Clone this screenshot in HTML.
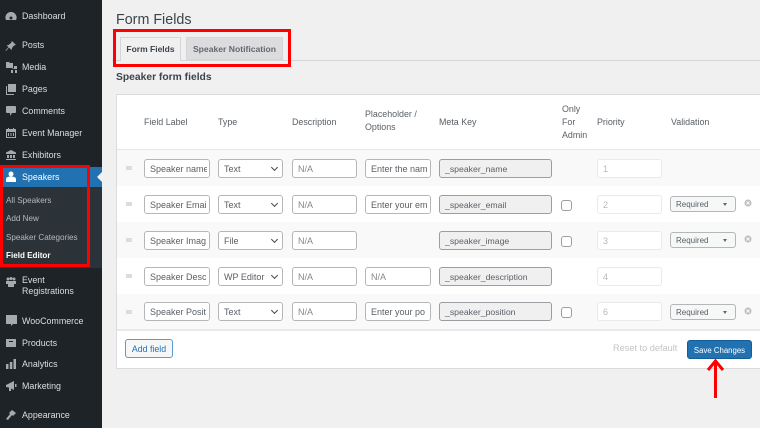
<!DOCTYPE html>
<html><head><meta charset="utf-8"><style>
html,body{margin:0;padding:0}
body{width:760px;height:428px;overflow:hidden;background:#f0f0f1;position:relative;font-family:"Liberation Sans",sans-serif;color:#3c434a}
div,span{position:absolute;box-sizing:border-box;white-space:nowrap}
.m{left:22px;font-size:8.9px;color:#dcdee0;line-height:12px}
.s{left:6px;font-size:8.1px;color:#b4b9be;line-height:12px}
.ic{position:absolute;left:5px}
.h{font-size:8.9px;color:#5a6066;line-height:13px}
.r{left:117px;width:643px;height:36px}
.i{height:19px;border:1px solid #b4b6b8;border-radius:3px;background:#fff;font-size:9px;color:#5a6066;line-height:18px;padding-left:5px;overflow:hidden}
.t:after{content:"";position:absolute;right:0;top:0;width:2px;height:17px;background:#fff}
.g{background:#f0f0f1;border-color:#9a9da1;font-size:8.7px}
.p{background:#fff;border-color:#e9eaeb;color:#b5b8bb}
.v{height:16px;width:66px;left:670px;border:1px solid #b4b6b8;border-radius:3px;background:#f6f7f7;font-size:8px;line-height:15px;padding-left:5px;color:#5a6066}
.v:after{content:"";position:absolute;right:8px;top:6px;border:2.500px solid transparent;border-top:3px solid #666;border-bottom:0}
.c{width:11px;height:11px;left:561px;border:1px solid #9a9da1;border-radius:3px;background:#fff}
.x{position:absolute;left:744px}
.d{left:126px;width:6px;height:4px;background:#dcdcde}
.a:after{content:"";position:absolute;right:5px;top:5px;width:4px;height:4px;border-right:1.100px solid #444;border-bottom:1.100px solid #444;transform:rotate(45deg)}
</style></head><body>
<div style="left:0;top:0;width:102px;height:428px;background:#1d2327"></div>
<div style="left:0;top:167px;width:102px;height:20px;background:#2271b1"></div>
<div style="left:0;top:187px;width:102px;height:81px;background:#2c3338"></div>
<div style="left:97px;top:172px;border:5px solid transparent;border-right:5px solid #f0f0f1;border-left:0"></div>

<svg class="ic" style="top:11px" width="12" height="12" viewBox="0 0 12 12"><path fill="#a7aaad" d="M6 1a5.500 5.500 0 0 0-5 8h10a5.500 5.500 0 0 0-5-8z"/><circle cx="6" cy="7" r="1.500" fill="#1d2327"/></svg>
<div class="m" style="top:10px">Dashboard</div>
<svg class="ic" style="top:40px" width="12" height="12" viewBox="0 0 12 12"><path fill="#a7aaad" d="M7 1l4 4-2 .5-2 2.500-.5 2L4 7.500 1 11l-.5-.5L3.500 7 1.500 5.500l2-.5 2.500-2z"/></svg>
<div class="m" style="top:39px">Posts</div>
<svg class="ic" style="top:61px" width="13" height="13" viewBox="0 0 13 13"><path fill="#a7aaad" d="M1 1h3l1 1h3v5H1zM7 8h5V5H9v2.500H7zM6 9h2v3H6zM10 9h2v3h-2z"/></svg>
<div class="m" style="top:61px">Media</div>
<svg class="ic" style="top:83px" width="12" height="12" viewBox="0 0 12 12"><path fill="#a7aaad" d="M3 1h8v8H3zM1 3h1v8h7v1H1z"/></svg>
<div class="m" style="top:83px">Pages</div>
<svg class="ic" style="top:105px" width="12" height="12" viewBox="0 0 12 12"><path fill="#a7aaad" d="M2 1h8a1 1 0 0 1 1 1v5a1 1 0 0 1-1 1H7l-2 3V8H2a1 1 0 0 1-1-1V2a1 1 0 0 1 1-1z"/></svg>
<div class="m" style="top:105px">Comments</div>
<svg class="ic" style="top:127px" width="12" height="12" viewBox="0 0 12 12"><path fill="#a7aaad" d="M1 2h2V1h1v1h4V1h1v1h2v9H1zM2 5v5h8V5zM3 6h1v3H3zM5.500 6h1v3h-1zM8 6h1v3H8z"/></svg>
<div class="m" style="top:127px">Event Manager</div>
<svg class="ic" style="top:149px" width="12" height="12" viewBox="0 0 12 12"><path fill="#a7aaad" d="M6 1l5 2.500V5H1V3.500zM2 6h2v3H2zM5 6h2v3H5zM8 6h2v3H8zM1 10h10v1H1z"/></svg>
<div class="m" style="top:149px">Exhibitors</div>
<svg class="ic" style="top:171px" width="12" height="12" viewBox="0 0 12 12"><circle cx="6" cy="3" r="2.500" fill="#fff"/><path fill="#fff" d="M1 11V8c0-1.500 2-2.500 5-2.500s5 1 5 2.500v3z"/></svg>
<div class="m" style="top:171px;color:#fff">Speakers</div>
<div class="s" style="top:195px">All Speakers</div>
<div class="s" style="top:213px">Add New</div>
<div class="s" style="top:232px">Speaker Categories</div>
<div class="s" style="top:250px;color:#fff;font-weight:bold">Field Editor</div>
<svg class="ic" style="top:276px" width="12" height="12" viewBox="0 0 12 12"><circle cx="3" cy="3" r="1.500" fill="#a7aaad"/><circle cx="6" cy="2.500" r="1.500" fill="#a7aaad"/><circle cx="9" cy="3" r="1.500" fill="#a7aaad"/><path fill="#a7aaad" d="M1 5h10v3H9v3H3V8H1z"/></svg>
<div class="m" style="top:275px;line-height:11px">Event<br>Registrations</div>
<svg class="ic" style="top:314px" width="13" height="13" viewBox="0 0 13 13"><path fill="#a7aaad" d="M1 1h11v9H8l-2 2v-2H1z"/></svg>
<div class="m" style="top:315px">WooCommerce</div>
<svg class="ic" style="top:337px" width="12" height="12" viewBox="0 0 12 12"><path fill="#a7aaad" d="M1 2h10v8H1zM4 4v1h4V4z"/></svg>
<div class="m" style="top:337px">Products</div>
<svg class="ic" style="top:358px" width="12" height="12" viewBox="0 0 12 12"><path fill="#a7aaad" d="M1 6h2.500v5H1zM4.800 4h2.500v7H4.800zM8.500 1H11v10H8.500z"/></svg>
<div class="m" style="top:358px">Analytics</div>
<svg class="ic" style="top:380px" width="12" height="12" viewBox="0 0 12 12"><path fill="#a7aaad" d="M1 5l8-4v9L6 8.500V11H4V7.500L1 7zM10 4h1.500v3H10z"/></svg>
<div class="m" style="top:380px">Marketing</div>
<svg class="ic" style="top:409px" width="12" height="12" viewBox="0 0 12 12"><path fill="#a7aaad" d="M7 1l4 3-3 3-1-1-4 5-2-1 4-5-1-1z"/></svg>
<div class="m" style="top:409px">Appearance</div>

<div style="left:116px;top:10px;font-size:14.300px;line-height:20px;color:#3c434a">Form Fields</div>
<div style="left:112px;top:60px;width:648px;height:1px;background:#d5d6d8"></div>
<div style="left:120px;top:37px;width:61px;height:24px;background:#f0f0f1;border:1px solid #d5d6d8;border-bottom:0;font-size:8.500px;font-weight:bold;text-align:center;line-height:23px;color:#3c434a">Form Fields</div>
<div style="left:186px;top:37px;width:97px;height:23px;background:#dcdcde;border:1px solid #d5d6d8;font-size:8.600px;font-weight:bold;text-align:center;line-height:23px;color:#62686e">Speaker Notification</div>
<div style="left:113px;top:29px;width:178px;height:38px;border:3px solid #f00"></div>
<div style="left:116px;top:71px;font-size:10.300px;font-weight:bold;line-height:14px;color:#3c434a">Speaker form fields</div>

<div style="left:116px;top:94px;width:644px;height:275px;background:#fff;border:1px solid #dcdcde;border-right:0"></div>
<div style="left:117px;top:149px;width:643px;height:1px;background:#e2e4e6"></div>
<div class="h" style="left:144px;top:116px">Field Label</div>
<div class="h" style="left:218px;top:116px">Type</div>
<div class="h" style="left:292px;top:116px">Description</div>
<div class="h" style="left:365px;top:108px">Placeholder /<br>Options</div>
<div class="h" style="left:439px;top:116px">Meta Key</div>
<div class="h" style="left:562px;top:103px">Only<br>For<br>Admin</div>
<div class="h" style="left:597px;top:116px">Priority</div>
<div class="h" style="left:671px;top:116px">Validation</div>

<div class="r" style="top:150px;background:#f9f9f9"></div>
<div class="r" style="top:222px;background:#f9f9f9"></div>
<div class="r" style="top:294px;background:#f9f9f9"></div>
<div style="left:117px;top:329px;width:643px;height:2px;background:#e8e9ea"></div>

<div class="d" style="top:166px"></div>
<div class="i t" style="left:144px;top:159px;width:66px">Speaker name</div>
<div class="i a" style="left:218px;top:159px;width:65px">Text</div>
<div class="i" style="left:292px;top:159px;width:65px;color:#888">N/A</div>
<div class="i t" style="left:365px;top:159px;width:66px">Enter the nam</div>
<div class="i g" style="left:439px;top:159px;width:113px">_speaker_name</div>
<div class="i p" style="left:597px;top:159px;width:65px">1</div>

<div class="d" style="top:202px"></div>
<div class="i t" style="left:144px;top:195px;width:66px">Speaker Emai</div>
<div class="i a" style="left:218px;top:195px;width:65px">Text</div>
<div class="i" style="left:292px;top:195px;width:65px;color:#888">N/A</div>
<div class="i t" style="left:365px;top:195px;width:66px">Enter your em</div>
<div class="i g" style="left:439px;top:195px;width:113px">_speaker_email</div>
<div class="c" style="top:200px"></div>
<div class="i p" style="left:597px;top:195px;width:65px">2</div>
<div class="v" style="top:196px">Required</div>
<svg class="x" style="top:199px" width="8" height="8" viewBox="0 0 8 8"><circle cx="4" cy="4" r="3.500" fill="#bdbfc1"/><path d="M2.500 2.500l3 3M5.500 2.500l-3 3" stroke="#fff" stroke-width=".9"/></svg>

<div class="d" style="top:238px"></div>
<div class="i t" style="left:144px;top:231px;width:66px">Speaker Imag</div>
<div class="i a" style="left:218px;top:231px;width:65px">File</div>
<div class="i" style="left:292px;top:231px;width:65px;color:#888">N/A</div>
<div class="i g" style="left:439px;top:231px;width:113px">_speaker_image</div>
<div class="c" style="top:236px"></div>
<div class="i p" style="left:597px;top:231px;width:65px">3</div>
<div class="v" style="top:232px">Required</div>
<svg class="x" style="top:235px" width="8" height="8" viewBox="0 0 8 8"><circle cx="4" cy="4" r="3.500" fill="#bdbfc1"/><path d="M2.500 2.500l3 3M5.500 2.500l-3 3" stroke="#fff" stroke-width=".9"/></svg>

<div class="d" style="top:274px"></div>
<div class="i t" style="left:144px;top:267px;width:66px">Speaker Desc</div>
<div class="i a" style="left:218px;top:267px;width:65px">WP Editor</div>
<div class="i" style="left:292px;top:267px;width:65px;color:#888">N/A</div>
<div class="i" style="left:365px;top:267px;width:66px;color:#888">N/A</div>
<div class="i g" style="left:439px;top:267px;width:113px">_speaker_description</div>
<div class="i p" style="left:597px;top:267px;width:65px">4</div>

<div class="d" style="top:310px"></div>
<div class="i t" style="left:144px;top:302px;width:66px">Speaker Posit</div>
<div class="i a" style="left:218px;top:302px;width:65px">Text</div>
<div class="i" style="left:292px;top:302px;width:65px;color:#888">N/A</div>
<div class="i t" style="left:365px;top:302px;width:66px">Enter your po</div>
<div class="i g" style="left:439px;top:302px;width:113px">_speaker_position</div>
<div class="c" style="top:307px"></div>
<div class="i p" style="left:597px;top:302px;width:65px">6</div>
<div class="v" style="top:304px">Required</div>
<svg class="x" style="top:307px" width="8" height="8" viewBox="0 0 8 8"><circle cx="4" cy="4" r="3.500" fill="#bdbfc1"/><path d="M2.500 2.500l3 3M5.500 2.500l-3 3" stroke="#fff" stroke-width=".9"/></svg>

<div style="left:125px;top:339px;width:48px;height:19px;border:1px solid #5b9bd0;border-radius:3px;background:#f6f7f7;color:#2271b1;font-size:8.800px;text-align:center;line-height:18px">Add field</div>
<div style="left:613px;top:342px;font-size:9.200px;line-height:13px;color:#c3c4c7">Reset to default</div>
<div style="left:687px;top:340px;width:65px;height:19px;background:#2271b1;border:1px solid #135e96;border-radius:3px;color:#fff;font-size:7.800px;text-align:center;line-height:19px">Save Changes</div>

<svg style="position:absolute;left:704px;top:357px" width="24" height="44" viewBox="0 0 24 44"><path d="M11.500 3v38" stroke="#f00" stroke-width="3" fill="none"/><path d="M4 13L11.500 4 19 13" stroke="#f00" stroke-width="3" fill="none"/></svg>
<div style="left:0;top:165px;width:90px;height:102px;border:3px solid #f00"></div>
</body></html>
